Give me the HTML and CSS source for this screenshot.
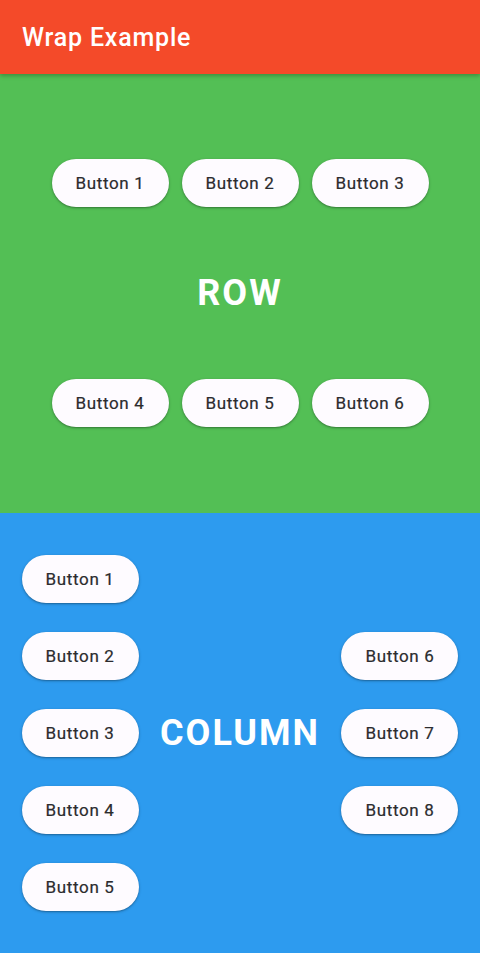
FILE: index.html
```html
<!DOCTYPE html>
<html>
<head>
<meta charset="utf-8">
<link rel="stylesheet" href="styles.css">
</head>
<body>
<header class="appbar">Wrap Example</header>
<section class="row-section">
  <div class="btn-row">
    <button class="btn">Button 1</button>
    <button class="btn">Button 2</button>
    <button class="btn">Button 3</button>
  </div>
  <div class="label row-label">ROW</div>
  <div class="btn-row">
    <button class="btn">Button 4</button>
    <button class="btn">Button 5</button>
    <button class="btn">Button 6</button>
  </div>
</section>
<section class="col-section">
  <div class="btn-col">
    <button class="btn">Button 1</button>
    <button class="btn">Button 2</button>
    <button class="btn">Button 3</button>
    <button class="btn">Button 4</button>
    <button class="btn">Button 5</button>
  </div>
  <div class="label">COLUMN</div>
  <div class="btn-col">
    <button class="btn">Button 6</button>
    <button class="btn">Button 7</button>
    <button class="btn">Button 8</button>
  </div>
</section>
</body>
</html>
```
FILE: styles.css
```css
html, body {
  margin: 0;
  padding: 0;
}
body {
  font-family: Roboto, "Noto Sans", sans-serif;
  width: 480px;
  height: 953px;
  overflow: hidden;
}
.appbar {
  position: relative;
  z-index: 2;
  height: 74px;
  box-sizing: border-box;
  background: #f44a29;
  color: #ffffff;
  font-size: 25px;
  font-weight: 500;
  letter-spacing: 0.8px;
  display: flex;
  align-items: center;
  padding-left: 22px;
  box-shadow: 0 2px 4px rgba(0,0,0,0.25);
}
.row-section {
  height: 439px;
  box-sizing: border-box;
  background: #53bf55;
  display: flex;
  flex-direction: column;
  align-items: center;
  padding-top: 85px;
}
.btn-row {
  display: flex;
  gap: 13px;
  height: 48px;
}
.row-label {
  height: 172px;
}
.label {
  display: flex;
  align-items: center;
  justify-content: center;
  color: #ffffff;
  font-size: 36px;
  font-weight: 700;
  letter-spacing: 2px;
}
.col-section {
  height: 440px;
  background: #2d9bef;
  display: flex;
  justify-content: space-evenly;
  align-items: center;
}
.btn-col {
  display: flex;
  flex-direction: column;
  gap: 29px;
}
.btn {
  width: 117px;
  height: 48px;
  padding: 0;
  border: none;
  border-radius: 24px;
  background: #fefbff;
  color: #2b2b2e;
  font-family: Roboto, "Noto Sans", sans-serif;
  font-size: 17px;
  font-weight: 400;
  letter-spacing: 0.65px;
  -webkit-text-stroke: 0.2px #2b2b2e;
  box-shadow: 0 1px 3px rgba(0,0,0,0.28), 0 1px 1px rgba(0,0,0,0.12);
  white-space: nowrap;
}
```
